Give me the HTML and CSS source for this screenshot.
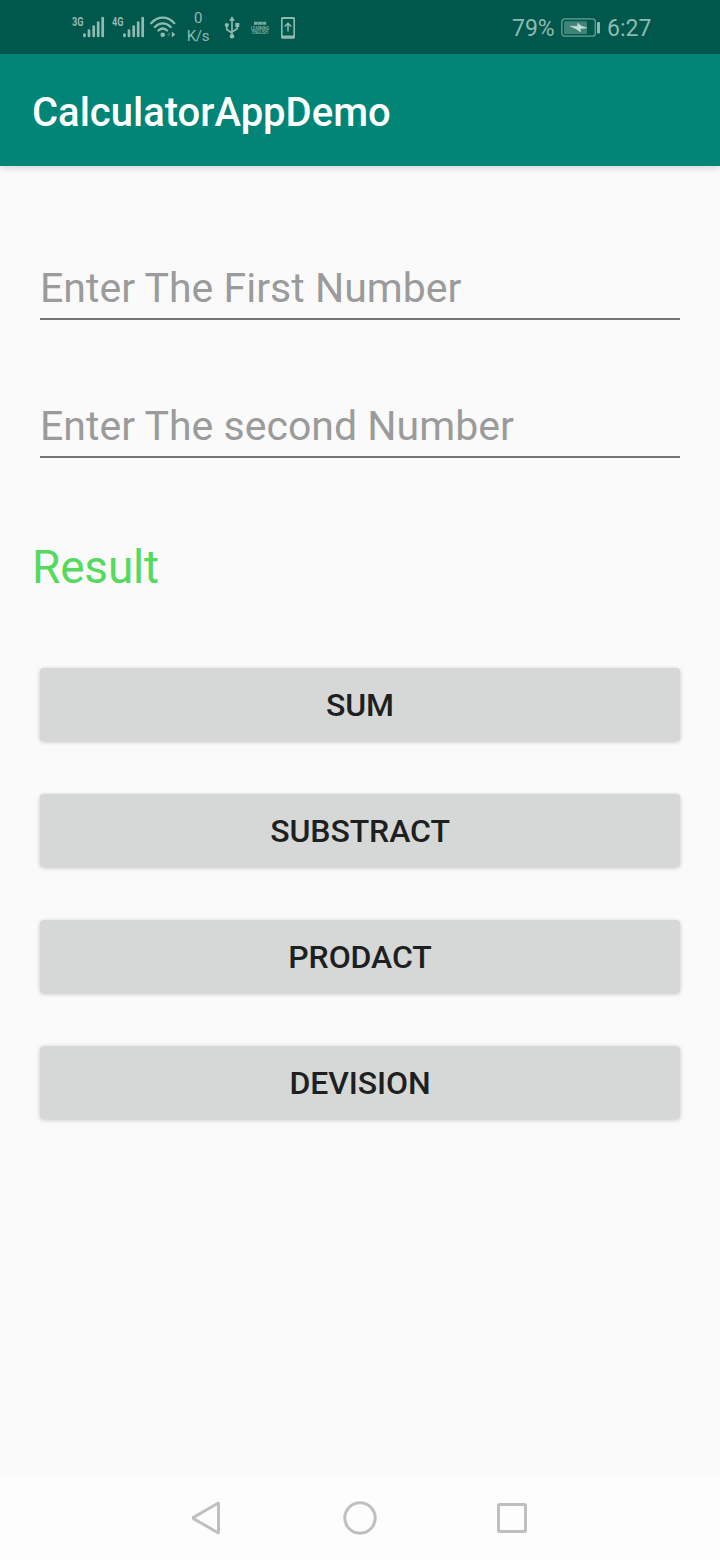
FILE: index.html
```html
<!DOCTYPE html>
<html lang="en">
<head>
<meta charset="utf-8">
<title>CalculatorAppDemo</title>
<link rel="stylesheet" href="styles.css">
</head>
<body>
<div class="screen">
  <header class="status">
    <svg class="signal" width="34" height="26" viewBox="0 0 34 26">
      <text class="net" x="0" y="11" textLength="11.5" lengthAdjust="spacingAndGlyphs">3G</text>
      <path class="bars" d="M12.5 19.5v1.5M17 15.5v5.5M21.7 11.5v9.5M26.2 7.5v13.5M30.7 3v18"/>
    </svg>
    <svg class="signal second" width="34" height="26" viewBox="0 0 34 26">
      <text class="net" x="0" y="11" textLength="11.5" lengthAdjust="spacingAndGlyphs">4G</text>
      <path class="bars" d="M12.5 19.5v1.5M17 15.5v5.5M21.7 11.5v9.5M26.2 7.5v13.5M30.7 3v18"/>
    </svg>
    <svg class="wifi" width="28" height="24" viewBox="0 0 28 24">
      <g fill="none" stroke="currentColor" stroke-width="2.3" stroke-linecap="round">
        <path d="M1.2 8.2C7.800.8 17.700.8 24.300 8.2M4.800 12c4.8-4.9 11.1-4.9 15.9 0M8.400 15.5c2.8-2.5 5.9-2.5 8.7 0"/>
      </g>
      <circle cx="12.7" cy="19.7" r="2.3" fill="currentColor"/>
      <path d="M20 17v5l-3.300-2.500z" fill="currentColor" opacity=".35"/>
      <path d="M21.800 16.500v6l3.500-3z" fill="currentColor"/>
    </svg>
    <div class="speed"><span>0</span><span>K/s</span></div>
    <svg class="usb" width="16" height="24" viewBox="0 0 16 24">
      <path d="M8 3.500v16M2.700 9v4.500L8 17M13.300 9v3.500L8 16" fill="none" stroke="currentColor" stroke-width="1.600"/>
      <path d="M8 .3l3 4.500H5zM11.300 7h4v4h-4z" fill="currentColor"/>
      <circle cx="2.800" cy="9" r="2.100" fill="currentColor"/>
      <circle cx="8" cy="20.300" r="2.300" fill="currentColor"/>
    </svg>
    <svg class="learn" width="24" height="16" viewBox="-3 0 24 16">
      <path d="M3 .8h3.800v3H3zM7.200.8H11v3H7.200zM11.400.8h3.800v3h-3.800z" fill="currentColor" opacity=".85"/>
      <text x="0" y="8.600" textLength="18" lengthAdjust="spacingAndGlyphs">LEARNING</text>
      <text x="1" y="13.200" textLength="16" lengthAdjust="spacingAndGlyphs">ENGLISH</text>
    </svg>
    <svg class="update" width="14" height="22" viewBox="0 0 14 22">
      <path d="M1.500 0h11Q14 0 14 1.500v18.500q0 1.700-1.500 1.700h-11Q0 21.700 0 20V1.500Q0 0 1.500 0zM1.600 2v16.500h10.800V2z" fill="currentColor" fill-rule="evenodd"/>
      <path d="M7 14.500V6.500M3.700 9.500L7 6.200l3.300 3.300" fill="none" stroke="currentColor" stroke-width="1.500"/>
    </svg>
    <span class="percent">79%</span>
    <svg class="battery" width="40" height="20" viewBox="0 0 40 20">
      <rect x=".8" y="1.900" width="33.500" height="17.300" rx="3" fill="none" stroke="currentColor" stroke-width="1.300" opacity=".75"/>
      <rect x="3" y="4.200" width="23" height="12.700" rx="1" fill="currentColor" opacity=".45"/>
      <path d="M9.500 9.300l7.500.1-.5-3 4.500 3 4.500 1.400-6.500.7.500 3.200-5-3.300z" fill="#c3dcd6" stroke="#c3dcd6" stroke-width=".8"/>
      <rect x="36" y="5" width="3" height="11.500" rx="1" fill="currentColor"/>
    </svg>
    <span class="clock">6:27</span>
  </header>
  <div class="appbar"><h1 class="title">CalculatorAppDemo</h1></div>
  <main class="form">
    <input class="field" type="text" placeholder="Enter The First Number" aria-label="First number">
    <input class="field" type="text" placeholder="Enter The second Number" aria-label="Second number">
    <div class="result">Result</div>
    <div class="actions">
      <button class="action">SUM</button>
      <button class="action">SUBSTRACT</button>
      <button class="action">PRODACT</button>
      <button class="action">DEVISION</button>
    </div>
  </main>
  <nav class="navbar">
    <svg width="36" height="36" viewBox="0 0 36 36"><path d="M28.500 3.500v29Q28.500 33 27.900 32.700L3.700 18.700Q2.800 18 3.700 17.300L27.900 3.300Q28.500 3 28.500 3.500z"/></svg>
    <svg width="36" height="36" viewBox="0 0 36 36"><circle cx="18" cy="18" r="15.200"/></svg>
    <svg width="36" height="36" viewBox="0 0 36 36"><rect x="4.500" y="4.500" width="27" height="27" rx="1"/></svg>
  </nav>
</div>
</body>
</html>
```
FILE: styles.css
```css
* { box-sizing: border-box; }
body { margin: 0; font-family: Roboto, "Liberation Sans", sans-serif; }
.screen { width: 720px; height: 1560px; display: flex; flex-direction: column; background: #fafafa; }

.status { height: 54px; flex: none; display: flex; align-items: flex-start; padding-left: 72px; background: #00574b; color: #8fbab2; }
.status > * { flex: none; }
.signal { margin-top: 15px; }
.second { margin-left: 6px; }
.net { font-size: 12.500px; font-weight: 700; fill: currentColor; }
.bars { fill: none; stroke: currentColor; stroke-width: 2.700; stroke-linecap: round; }
.wifi { margin: 15px 0 0 4px; }
.speed { width: 34px; margin: 9px 0 0 3px; display: flex; flex-direction: column; align-items: center; font-size: 15px; line-height: 18px; letter-spacing: -.2px; }
.usb { margin: 16px 0 0 9px; }
.learn { margin: 21px 0 0 8px; overflow: visible; font-size: 4.500px; font-weight: 500; }
.learn text { fill: currentColor; }
.update { margin: 17px 0 0 9px; }
.percent { width: 49px; margin: 15px 0 0 217px; font-size: 23px; line-height: 28px; }
.battery { margin-top: 17px; }
.clock { margin: 15px 0 0 6px; font-size: 23px; line-height: 28px; }

.appbar { height: 112px; flex: none; display: flex; align-items: center; padding: 6px 32px 0; background: #008577; box-shadow: 0 1px 8px rgba(0, 0, 0, .18); clip-path: inset(0 0 -20px 0); }
.title { margin: 0; font-size: 40px; font-weight: 500; line-height: 48px; color: #fff; }

.form { flex: 1; padding: 84px 40px 0; display: flex; flex-direction: column; }
.field { width: 100%; height: 70px; margin-bottom: 68px; padding: 8px 0 0; border: 0; border-bottom: 2px solid #757575; background: transparent; font: 400 41px/52px Roboto, "Liberation Sans", sans-serif; letter-spacing: .02px; outline: none; border-radius: 0; }
.field::placeholder { color: #9b9b9b; opacity: 1; }
.result { margin: 13px 0 0 -8px; height: 56px; font-size: 46px; line-height: 56px; letter-spacing: -.2px; color: #55d95f; }
.actions { margin-top: 73px; display: flex; flex-direction: column; gap: 53px; }
.action { height: 73px; padding: 0; border: 0; border-radius: 4px; background: #d6d8d7; box-shadow: 0 1px 4px rgba(0, 0, 0, .22); color: #1e1f1f; font: 500 32px/40px Roboto, "Liberation Sans", sans-serif; letter-spacing: -.1px; }

.navbar { height: 84px; flex: none; display: flex; justify-content: center; align-items: center; gap: 116px; background: #fdfdfd; }
.navbar svg { fill: none; stroke: #bfbfbf; stroke-width: 3; }
```
